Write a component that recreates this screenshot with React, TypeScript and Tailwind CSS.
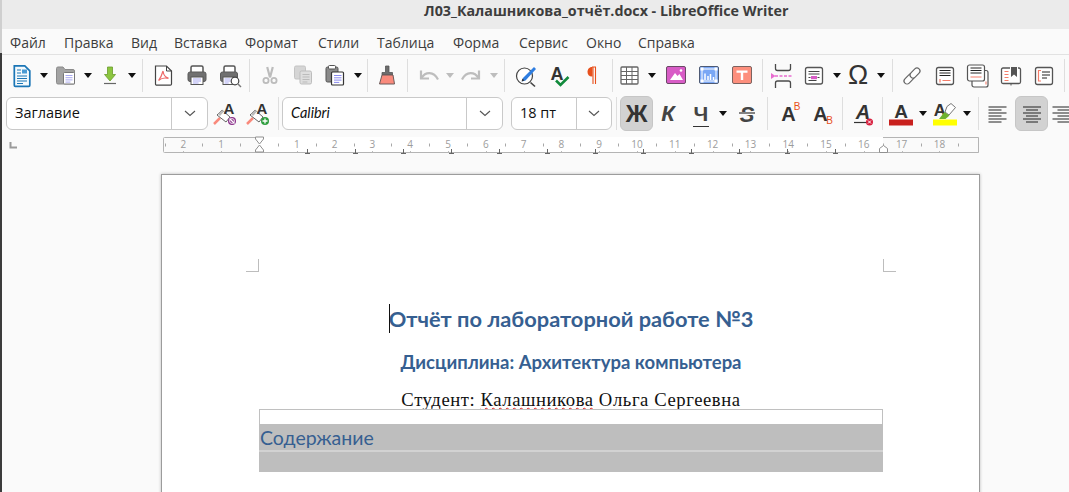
import React from "react";

const UI = "font-['Open_Sans','Noto_Sans',sans-serif]";

function I({ children }: { children: React.ReactNode }) {
  return (
    <svg width="24" height="24" viewBox="0 0 24 24" fill="none" className="shrink-0 overflow-visible">
      {children}
    </svg>
  );
}

function Cell({ w, children }: { w: string; children?: React.ReactNode }) {
  return <div className={`${w} shrink-0 h-full flex items-center justify-center`}>{children}</div>;
}

function Ar({ w, light }: { w: string; light?: boolean }) {
  return (
    <Cell w={w}>
      <svg width="8" height="5" viewBox="0 0 8 5" className="shrink-0">
        <path d="M0 0h8L4 5z" fill={light ? "#bdbdbd" : "#111"} />
      </svg>
    </Cell>
  );
}

function Sep({ w }: { w: string }) {
  return (
    <Cell w={w}>
      <div className="w-px h-[33px] bg-[#dedede]" />
    </Cell>
  );
}

function Chevron() {
  return (
    <svg width="12" height="7" viewBox="0 0 12 7" fill="none">
      <path d="M1 1l5 4.5L11 1" stroke="#555" strokeWidth="1.1" />
    </svg>
  );
}

function Combo({ w, dd, italic, text }: { w: string; dd: string; italic?: boolean; text: string }) {
  return (
    <div className={`${w} shrink-0 h-[33px] rounded-md border border-[#c9c9c9] bg-white flex items-stretch`}>
      <div className={`flex-1 flex items-center pl-[8px] pb-px text-[14.5px] text-[#111] ${italic ? "italic font-['Lato',sans-serif]" : UI}`}>{text}</div>
      <div className={`${dd} shrink-0 border-l border-[#c9c9c9] flex items-center justify-center`}>
        <Chevron />
      </div>
    </div>
  );
}

const A = ({ x = 12, y = 19, s = 22, c = "#333", it = false }: { x?: number; y?: number; s?: number; c?: string; it?: boolean }) => (
  <text x={x} y={y} textAnchor="middle" fontSize={s} fontWeight="700" fontStyle={it ? "italic" : "normal"} fontFamily="'Liberation Sans',sans-serif" fill={c}>
    A
  </text>
);

const Lines = ({ x, y, w, n, c = "#a9a9f0", gap = 2.5 }: { x: number; y: number; w: number; n: number; c?: string; gap?: number }) => (
  <>
    {Array.from({ length: n }).map((_, i) => (
      <path key={i} d={`M${x} ${y + i * gap}h${i === n - 1 ? w * 0.7 : w}`} stroke={c} strokeWidth="1" />
    ))}
  </>
);

const Ic = {
  doc: (
    <I>
      <path d="M4.300 1.800h10.500l5 5v14.500a1 1 0 0 1-1 1H5.300a1 1 0 0 1-1-1z" fill="#f4fafd" stroke="#1b76b6" strokeWidth="1.700" />
      <path d="M7 6h4M7 9h4M7 12h10M7 14.500h10M7 17h10M7 19.500h6" stroke="#1b76b6" strokeWidth="1.200" />
      <rect x="12" y="5.500" width="5" height="4" fill="#4a9bd4" />
    </I>
  ),
  folder: (
    <I>
      <path d="M2.500 4.500A1.500 1.500 0 0 1 4 3h5l2 2.500h8A1.500 1.500 0 0 1 20.500 7v13H4A1.500 1.500 0 0 1 2.500 18.500z" fill="#a3a3a3" stroke="#8b8b8b" />
      <rect x="9.500" y="8.500" width="11" height="11.500" rx="1" fill="#fff" stroke="#777" />
      <Lines x={11.500} y={11.500} w={7} n={4} gap={2.200} />
    </I>
  ),
  save: (
    <I>
      <path d="M9.500 3h5v7.500h3L12 17l-5.500-6.500h3z" fill="#8cc63f" stroke="#6a9a2c" strokeWidth=".8" />
      <path d="M6 19.500h12" stroke="#666" strokeWidth="1.200" />
    </I>
  ),
  pdf: (
    <I>
      <path d="M3.500 2h11l5 5v13a1.200 1.200 0 0 1-1.200 1.200H4.700A1.200 1.200 0 0 1 3.500 20z" fill="#fff" stroke="#444" strokeWidth="1.200" />
      <path d="M14.500 2v5h5" stroke="#444" />
      <path d="M11 7c-.8 3-2.500 7-4.500 9.500M11 7c.5 4 3 6.500 5.500 7M6.500 16.500c3-2.500 6.500-3 10-2" stroke="#ee6a6a" strokeWidth="1.200" />
    </I>
  ),
  print: (
    <I>
      <path d="M6 8V3.500A1.500 1.500 0 0 1 7.500 2h9A1.500 1.500 0 0 1 18 3.500V8" fill="#fff" stroke="#555" strokeWidth="1.500" />
      <rect x="3" y="8" width="18" height="9.500" rx="2" fill="#707070" stroke="#5a5a5a" />
      <rect x="6" y="13" width="12" height="7.500" fill="#fff" stroke="#555" />
      <Lines x={8} y={15} w={8} n={3} gap={2} />
    </I>
  ),
  preview: (
    <I>
      <path d="M6 8V3.500A1.500 1.500 0 0 1 7.500 2h8A1.500 1.500 0 0 1 17 3.500V8" fill="#fff" stroke="#555" strokeWidth="1.500" />
      <rect x="2.500" y="8" width="17" height="9.500" rx="2" fill="#707070" stroke="#5a5a5a" />
      <rect x="5" y="13" width="10" height="7.500" fill="#fff" stroke="#555" />
      <Lines x={6.500} y={15} w={6} n={3} gap={2} />
      <circle cx="17" cy="17" r="3.800" fill="#fff" stroke="#444" strokeWidth="1.200" />
      <path d="M20 20l3 3" stroke="#777" strokeWidth="1.400" />
    </I>
  ),
  cut: (
    <I>
      <path d="M9.200 3l2.800 10.500M14.800 3L12 13.500" stroke="#bcbcbc" strokeWidth="2.200" />
      <circle cx="8" cy="16.500" r="2.600" stroke="#bcbcbc" strokeWidth="1.800" />
      <circle cx="16" cy="16.500" r="2.600" stroke="#bcbcbc" strokeWidth="1.800" />
    </I>
  ),
  copy: (
    <I>
      <rect x="3.500" y="2" width="11" height="13" rx="1.500" fill="#d5d5d5" stroke="#c4c4c4" />
      <rect x="9" y="7" width="11.500" height="13" rx="1.500" fill="#dedede" stroke="#bdbdbd" />
      <Lines x={11.500} y={10.500} w={7} n={4} c="#bbb" />
    </I>
  ),
  paste: (
    <I>
      <rect x="2" y="3" width="12" height="15" rx="1.500" fill="#8a8a8a" stroke="#555" />
      <rect x="4.500" y="1.500" width="7" height="3.500" rx="1" fill="#fff" stroke="#555" />
      <rect x="7.500" y="8" width="12" height="13" rx="1" fill="#fff" stroke="#333" strokeWidth="1.200" />
      <Lines x={10} y={11.500} w={7.500} n={4} gap={2.300} c="#8b8bee" />
    </I>
  ),
  brush: (
    <I>
      <path d="M9.500 2h3.500v6.500h3.500V11H6V8.500h3.500z" fill="#6d6d6d" stroke="#555" strokeWidth=".8" />
      <path d="M6 11h11l1.500 9h-15z" fill="#f98a7c" stroke="#6b5b5a" />
    </I>
  ),
  undo: (
    <I>
      <path d="M5 6.500v8h8" stroke="#bdbdbd" strokeWidth="2.200" />
      <path d="M5.500 14c4-6.500 12-7 16.500 1.500" stroke="#bdbdbd" strokeWidth="2.200" />
    </I>
  ),
  redo: (
    <I>
      <path d="M19 6.500v8h-8" stroke="#bdbdbd" strokeWidth="2.200" />
      <path d="M18.500 14c-4-6.500-12-7-16.500 1.500" stroke="#bdbdbd" strokeWidth="2.200" />
    </I>
  ),
  find: (
    <I>
      <circle cx="10.500" cy="12" r="8" fill="#fff" stroke="#444" strokeWidth="1.200" />
      <path d="M16.500 18.500l4.500 4" stroke="#444" strokeWidth="1.600" />
      <path d="M9 14L20 3l2 2-10.500 11.500-3.500 1z" fill="#2e7de0" />
      <path d="M7.500 17.500l1-3 2 2z" fill="#333" />
    </I>
  ),
  spell: (
    <I>
      <A x={9} y={16} s={18} />
      <path d="M8 16.500l4.500 4.500L20.500 13" stroke="#118a3b" strokeWidth="2.600" />
    </I>
  ),
  pil: (
    <I>
      <path d="M11 12.500C8 12.500 6.500 10.500 6.500 8c0-2.500 1.500-5 4.500-5h.5v9.500z" fill="#e8501c" />
      <path d="M11 3h4M12 3v17M14.500 3v17" stroke="#e8501c" strokeWidth="1.100" />
    </I>
  ),
  table: (
    <I>
      <rect x="3" y="3" width="17" height="17" rx="1" stroke="#666" strokeWidth="1.300" fill="#fff" />
      <path d="M3 7.500h17M3 11.500h17M3 15.500h17M8.500 3v17M14 3v17" stroke="#666" />
    </I>
  ),
  image: (
    <I>
      <rect x="2.500" y="2.500" width="19" height="17" rx="1.500" fill="#d85cc6" stroke="#6a4a66" />
      <path d="M6 16l5-7 2.500 3 2-2 3.500 6z" fill="#fff" />
      <circle cx="17" cy="6.500" r="1.300" fill="#fff" />
    </I>
  ),
  chart: (
    <I>
      <rect x="2.500" y="2.500" width="19" height="17" rx="1.500" fill="#7aa7f5" stroke="#4e5a74" />
      <rect x="5" y="5" width="14" height="12" stroke="#fff" />
      <path d="M8 16V9.500M11 16v-4M13.500 16v-6M16.500 16v-3" stroke="#fff" strokeWidth="1.500" />
      <path d="M3.500 3.500h3v3h-3zM17.500 3.500h3v3h-3zM3.500 15.500h3v3h-3zM17.500 15.500h3v3h-3z" fill="#fff" />
    </I>
  ),
  tbox: (
    <I>
      <rect x="2.500" y="2.500" width="19" height="17" rx="1.500" fill="#fd8f7d" stroke="#7c6360" />
      <path d="M6.500 6.500h11v2.300h-4.300V16h-2.400V8.800H6.500z" fill="#fff" />
    </I>
  ),
  pbreak: (
    <I>
      <path d="M4.500 0v4.500a2 2 0 0 0 2 2h11a2 2 0 0 0 2-2V0M4.500 24v-5a2 2 0 0 1 2-2h11a2 2 0 0 1 2 2v5" stroke="#4a4a4a" strokeWidth="1.300" />
      <path d="M0 9l4.500 3L0 15z" fill="#e86cd0" />
      <path d="M4 12h17" stroke="#e86cd0" strokeWidth="1.300" strokeDasharray="3 1.500" />
    </I>
  ),
  field: (
    <I>
      <rect x="3.500" y="3.500" width="17" height="16.500" rx="2" fill="#fff" stroke="#555" strokeWidth="1.300" />
      <path d="M6.500 7.500h11M6.500 10h11M6.500 16.500h8" stroke="#444" />
      <rect x="9" y="12" width="6" height="3.200" fill="#d85cc6" />
      <path d="M6.500 13.500h2M15.500 13.500h2" stroke="#444" />
    </I>
  ),
  link: (
    <I>
      <g transform="rotate(-45 12 12)" stroke="#666" strokeWidth="1.200" fill="#fff">
        <rect x="2" y="9" width="11.500" height="6" rx="3" />
        <rect x="10.500" y="9" width="11.500" height="6" rx="3" />
      </g>
    </I>
  ),
  foot: (
    <I>
      <rect x="3.500" y="3.500" width="17" height="17" rx="2" fill="#fff" stroke="#555" strokeWidth="1.300" />
      <path d="M6.500 6.500h11M6.500 9h11M6.500 11.500h11" stroke="#222" />
      <path d="M9.500 16.500h8M7 15v3.500" stroke="#f47d6a" strokeWidth="1.200" />
    </I>
  ),
  endn: (
    <I>
      <rect x="6" y="6.500" width="16" height="16.500" rx="2" fill="#fff" stroke="#555" strokeWidth="1.200" />
      <rect x="1.500" y="1" width="17" height="16" rx="2" fill="#fff" stroke="#555" strokeWidth="1.200" />
      <path d="M4.500 4h11M4.500 6.500h11M4.500 9h11" stroke="#222" />
      <path d="M4.500 13h11M20 17.500v3" stroke="#f47d6a" strokeWidth="1.100" />
    </I>
  ),
  book: (
    <I>
      <path d="M11 4H4a1.500 1.500 0 0 0-1.500 1.500V18A1.500 1.500 0 0 0 4 19.500h16a1.500 1.500 0 0 0 1.500-1.500V5.500A1.500 1.500 0 0 0 20 4h-1" fill="#fff" stroke="#555" strokeWidth="1.300" />
      <path d="M12 3h6v10l-3-2.500L12 13z" fill="#555" />
      <path d="M5.500 7.500h4M5.500 10.500h4M5.500 13.500h4M5.500 16.500h4" stroke="#f47d6a" strokeWidth="1.200" />
      <path d="M12 19.500v2" stroke="#555" />
    </I>
  ),
  xref: (
    <I>
      <rect x="3.500" y="3.500" width="17" height="17" rx="2" fill="#fff" stroke="#555" strokeWidth="1.300" />
      <path d="M10 8h8M10 11h8M10 14h5" stroke="#222" />
      <path d="M9 6.500H6.500V17H9" stroke="#f47d6a" strokeWidth="1.200" />
    </I>
  ),
  clearStyle: (
    <I>
      <path d="M1 22l6-6" stroke="#f98a7c" strokeWidth="2.500" />
      <path d="M4 13l5-5 8 7-4 5z" fill="#fff" stroke="#666" />
      <path d="M5 12l4-4 2 1.500-4 4.500z" fill="#bbb" />
      <A x={16} y={12} s={15} />
      <circle cx="19" cy="19" r="4" fill="#8a2f8a" />
      <path d="M16.500 16.500l5 5" stroke="#fff" strokeWidth="1.200" />
      <circle cx="19" cy="19" r="2.400" stroke="#fff" strokeWidth=".9" />
    </I>
  ),
  newStyle: (
    <I>
      <path d="M1 22l6-6" stroke="#f98a7c" strokeWidth="2.500" />
      <path d="M4 13l5-5 8 7-4 5z" fill="#fff" stroke="#666" />
      <path d="M5 12l4-4 2 1.500-4 4.500z" fill="#bbb" />
      <A x={16} y={12} s={15} />
      <circle cx="19" cy="19" r="4" fill="#2f9e3f" />
      <path d="M16.500 19h5M19 16.500v5" stroke="#fff" strokeWidth="1.300" />
    </I>
  ),
  strike: (
    <I>
      <text x="12" y="19.500" textAnchor="middle" fontSize="22" fontWeight="700" fontStyle="italic" fontFamily="'Liberation Sans',sans-serif" fill="#444">S</text>
      <path d="M4 11.500h16" stroke="#fafafa" strokeWidth="3" />
      <path d="M4 11h16" stroke="#333" strokeWidth="1.200" />
    </I>
  ),
  clearFmt: (
    <I>
      <A x={12} y={17} s={20} it />
      <path d="M3 20.500h13" stroke="#333" strokeWidth="1.200" />
      <circle cx="18.500" cy="20" r="3.500" fill="#d8203f" />
      <path d="M17 18.500l3 3M20 18.500l-3 3" stroke="#fff" />
    </I>
  ),
  fontColor: (
    <I>
      <A x={12} y={16} s={19} />
      <rect x="0" y="17.500" width="24" height="6" fill="#c9211e" />
    </I>
  ),
  hl: (
    <I>
      <A x={7} y={14} s={17} />
      <path d="M14 4.500l4-3 4.500 4-6.500 7.500-4-3z" fill="#fff" stroke="#777" />
      <path d="M6 17l5.500-7 5 3.500-4 3.500z" fill="#6eb22f" />
      <rect x="0" y="17.500" width="24" height="6" fill="#ffff00" />
    </I>
  ),
  left: (
    <I>
      <path d="M3.500 5h18M3.500 8h13M3.500 11h18M3.500 14h13M3.500 17h18M3.500 20h13" stroke="#222" strokeWidth="1.100" />
    </I>
  ),
  center: (
    <I>
      <path d="M3 5h18M6 8h12M3 11h18M6 14h12M3 17h18M6 20h12" stroke="#222" strokeWidth="1.100" />
    </I>
  ),
  right: (
    <I>
      <path d="M2.500 5h18M7.500 8h13M2.500 11h18M7.500 14h13M2.500 17h18M7.500 20h13" stroke="#222" strokeWidth="1.100" />
    </I>
  ),
  sup: (
    <I>
      <A x={10.500} y={18.500} s={20} />
      <text x="19" y="7.500" textAnchor="middle" fontSize="10" fontFamily="'Liberation Sans',sans-serif" fill="#e8501c">B</text>
    </I>
  ),
  sub: (
    <I>
      <A x={10.500} y={18.500} s={20} />
      <text x="19.500" y="22" textAnchor="middle" fontSize="10" fontFamily="'Liberation Sans',sans-serif" fill="#e8501c">B</text>
    </I>
  ),
};

const MENU = [
  ["Файл", "w-[54px]"],
  ["Правка", "w-[67px]"],
  ["Вид", "w-[43px]"],
  ["Вставка", "w-[71px]"],
  ["Формат", "w-[73px]"],
  ["Стили", "w-[59px]"],
  ["Таблица", "w-[76px]"],
  ["Форма", "w-[66px]"],
  ["Сервис", "w-[67px]"],
  ["Окно", "w-[52px]"],
  ["Справка", "w-[70px]"],
];

function Ruler() {
  const nums: [number, string][] = [];
  [2, 1].forEach((n) => nums.push([259 - n * 37.8, String(n)]));
  for (let n = 1; n <= 18; n++) nums.push([259 + n * 37.8, String(n)]);
  const half: number[] = [];
  for (let n = -3; n < 19; n++) half.push(259 + (n + 0.5) * 37.8);
  const tabs: number[] = [];
  for (let x = 307; x <= 835; x += 48) tabs.push(x);
  return (
    <svg width="1067" height="24" viewBox="2 131 1067 24" className="block">
      <path d="M10.500 142v5.500H17" stroke="#9a9a9a" strokeWidth="2" fill="none" />
      <rect x="163.500" y="137.500" width="815" height="15" rx="1" fill="#fafafa" stroke="#b4b4b4" />
      <rect x="259" y="137" width="624" height="15" fill="#fff" />
      <path d="M883 137.500h95.500v15H883" fill="none" stroke="#b4b4b4" />
      {half.filter((x) => x > 164 && x < 978).map((x) => (
        <path key={x} d={`M${Math.round(x) + 0.5} 143.500v3`} stroke="#a8a8a8" />
      ))}
      {nums.map(([x, t], i) => (
        <g key={i}>
          <path d={`M${Math.round(x) + 0.5} 151v1`} stroke="#bbb" />
          <text x={x} y="148" textAnchor="middle" fontSize="10" fontFamily="'Open Sans',sans-serif" fill="#9c9c9c">{t}</text>
        </g>
      ))}
      {tabs.map((x) => (
        <path key={x} d={`M${x + 0.5} 149v5M${x - 2} 153.500h5`} stroke="#666" fill="none" />
      ))}
      <path d="M255.500 137h8v2l-4 5-4-5zM255.500 152h8v-2l-4-5-4 5z" fill="#fff" stroke="#909090" />
      <path d="M879.500 152.500v-4l4-3 4 3v4z" fill="#fff" stroke="#909090" />
    </svg>
  );
}

export default function App() {
  return (
    <div className={`w-[1069px] h-[492px] overflow-hidden flex bg-[#fafafa] ${UI}`}>
      <div className="w-[2px] shrink-0 flex flex-col">
        <div className="h-[53px] bg-[#cfcfcf]" />
        <div className="flex-1 bg-[#3c3c3c]" />
      </div>
      <div className="flex-1 min-w-0 flex flex-col">
        <div className="h-[29px] shrink-0 bg-[#ebebeb] pl-[422px] pt-[2px] text-[14.3px] leading-[18px] font-bold text-[#3d3d3d] whitespace-nowrap">
          Л03_Калашникова_отчёт.docx - LibreOffice Writer
        </div>

        <div className="h-[26px] shrink-0 flex items-center pl-[8px] pt-[2px] border-b border-[#e2e2e2] text-[14px] text-[#3d3d3d] whitespace-nowrap">
          {MENU.map(([t, w]) => (
            <div key={t} className={`${w} shrink-0`}>{t}</div>
          ))}
        </div>

        <div className="h-[41px] shrink-0 flex items-center pl-[3px]">
          <Cell w="w-[33px]">{Ic.doc}</Cell>
          <Ar w="w-[11px]" />
          <Cell w="w-[33px]">{Ic.folder}</Cell>
          <Ar w="w-[11px]" />
          <Cell w="w-[33px]">{Ic.save}</Cell>
          <Ar w="w-[12px]" />
          <Sep w="w-[9px]" />
          <Cell w="w-[33px]">{Ic.pdf}</Cell>
          <Cell w="w-[33px]">{Ic.print}</Cell>
          <Cell w="w-[33px]">{Ic.preview}</Cell>
          <Sep w="w-[7px]" />
          <Cell w="w-[33px]">{Ic.cut}</Cell>
          <Cell w="w-[33px]">{Ic.copy}</Cell>
          <Cell w="w-[33px]">{Ic.paste}</Cell>
          <Ar w="w-[12px]" />
          <Sep w="w-[7px]" />
          <Cell w="w-[33px]">{Ic.brush}</Cell>
          <Sep w="w-[7px]" />
          <Cell w="w-[33px]">{Ic.undo}</Cell>
          <Ar w="w-[11px]" light />
          <Cell w="w-[33px]">{Ic.redo}</Cell>
          <Ar w="w-[11px]" light />
          <Sep w="w-[10px]" />
          <Cell w="w-[33px]">{Ic.find}</Cell>
          <Cell w="w-[35px]">{Ic.spell}</Cell>
          <Cell w="w-[31px]">{Ic.pil}</Cell>
          <Sep w="w-[8px]" />
          <Cell w="w-[28px]">{Ic.table}</Cell>
          <Ar w="w-[16px]" />
          <Cell w="w-[32px]">{Ic.image}</Cell>
          <Cell w="w-[34px]">{Ic.chart}</Cell>
          <Cell w="w-[32px]">{Ic.tbox}</Cell>
          <Sep w="w-[8px]" />
          <Cell w="w-[34px]">{Ic.pbreak}</Cell>
          <Cell w="w-[28px]">{Ic.field}</Cell>
          <Ar w="w-[18px]" />
          <Cell w="w-[24px]">
            <span className="font-['Liberation_Sans',sans-serif] text-[27px] leading-none text-[#333]">Ω</span>
          </Cell>
          <Ar w="w-[22px]" />
          <Sep w="w-px" />
          <Cell w="w-[38px]">{Ic.link}</Cell>
          <Cell w="w-[28px]">{Ic.foot}</Cell>
          <Cell w="w-[38px]">{Ic.endn}</Cell>
          <Cell w="w-[28px]">{Ic.book}</Cell>
          <Cell w="w-[38px]">{Ic.xref}</Cell>
          <Sep w="w-[3px]" />
        </div>

        <div className="h-[35px] shrink-0 flex items-center pl-[4px] overflow-hidden">
          <Combo w="w-[202px]" dd="w-[36px]" text="Заглавие" />
          <Cell w="w-[33px]">{Ic.clearStyle}</Cell>
          <Cell w="w-[34px]">{Ic.newStyle}</Cell>
          <Sep w="w-[6px]" />
          <div className="w-px shrink-0" />
          <Combo w="w-[221px]" dd="w-[36px]" italic text="Calibri" />
          <div className="w-[8px] shrink-0" />
          <Combo w="w-[101px]" dd="w-[35px]" text="18 пт" />
          <Sep w="w-[8px]" />
          <div className="w-[33px] h-[35px] shrink-0 rounded-md border border-[#c6c6c6] bg-[#d2d2d2] flex items-center justify-center font-['Liberation_Sans',sans-serif] font-bold text-[24px] text-[#333]">Ж</div>
          <Cell w="w-[30px]">
            <span className="font-['Liberation_Sans',sans-serif] font-bold italic text-[22px] text-[#444]">К</span>
          </Cell>
          <Cell w="w-[36px]">
            <span className="font-['Liberation_Sans',sans-serif] font-bold text-[21px] leading-[25px] text-[#444] border-b border-[#333] px-px">Ч</span>
          </Cell>
          <Ar w="w-[8px]" />
          <Cell w="w-[40px]">{Ic.strike}</Cell>
          <Sep w="w-px" />
          <Cell w="w-[44px]">{Ic.sup}</Cell>
          <Cell w="w-[20px]">{Ic.sub}</Cell>
          <Sep w="w-[20px]" />
          <Cell w="w-[22px]">{Ic.clearFmt}</Cell>
          <Sep w="w-[16px]" />
          <Cell w="w-[22px]">{Ic.fontColor}</Cell>
          <Ar w="w-[22px]" />
          <Cell w="w-[22px]">{Ic.hl}</Cell>
          <Ar w="w-[22px]" />
          <Sep w="w-px" />
          <Cell w="w-[36px]">{Ic.left}</Cell>
          <div className="w-[33px] h-[35px] shrink-0 rounded-md border border-[#c6c6c6] bg-[#d2d2d2] flex items-center justify-center">{Ic.center}</div>
          <Cell w="w-[28px]">{Ic.right}</Cell>
        </div>

        <div className="h-[24px] shrink-0">
          <Ruler />
        </div>

        <div className="flex-1 min-h-0 overflow-hidden pt-[19px] pl-[159px]">
          <div className="relative w-[819px] h-[400px] bg-white border border-[#9c9c9c] shadow-[0_0_3px_rgba(0,0,0,0.25)] pl-[97px] pt-[129px]">
            <div className="absolute left-[84px] top-[84px] w-[13px] h-[13px] border-r border-b border-[#bdbdbd]" />
            <div className="absolute left-[721px] top-[84px] w-[13px] h-[13px] border-l border-b border-[#bdbdbd]" />
            <div className="absolute left-[227px] top-[129px] w-px h-[29px] bg-[#111]" />

            <div className="w-[624px] h-[30px] leading-[30px] text-center font-['Lato',sans-serif] font-bold text-[21.8px] text-[#365f91] whitespace-nowrap">
              Отчёт по лабораторной работе №3
            </div>
            <div className="w-[624px] h-[26px] mt-[15px] leading-[26px] text-center font-['Lato',sans-serif] font-bold text-[18.5px] text-[#365f91] whitespace-nowrap">
              Дисциплина: Архитектура компьютера
            </div>
            <div className="w-[624px] h-[21px] mt-[13px] leading-[23px] text-center font-['Liberation_Serif',serif] text-[18.67px] tracking-[0.57px] text-[#111] whitespace-nowrap">
              Студент: <span className="underline decoration-wavy decoration-[#e02020] decoration-1">Калашникова</span> Ольга Сергеевна
            </div>
            <div className="relative w-[624px]">
              <div className="h-[15px] bg-white border border-b-0 border-[#c0c0c0]" />
              <div className="h-[26px] bg-[#bebebe] pl-px font-['Lato',sans-serif] text-[19.5px] leading-[28px] text-[#365f91]">Содержание</div>
              <div className="h-[2px] bg-[#d2d2d2]" />
              <div className="h-[20px] bg-[#bebebe]" />
            </div>
          </div>
        </div>
      </div>
    </div>
  );
}
